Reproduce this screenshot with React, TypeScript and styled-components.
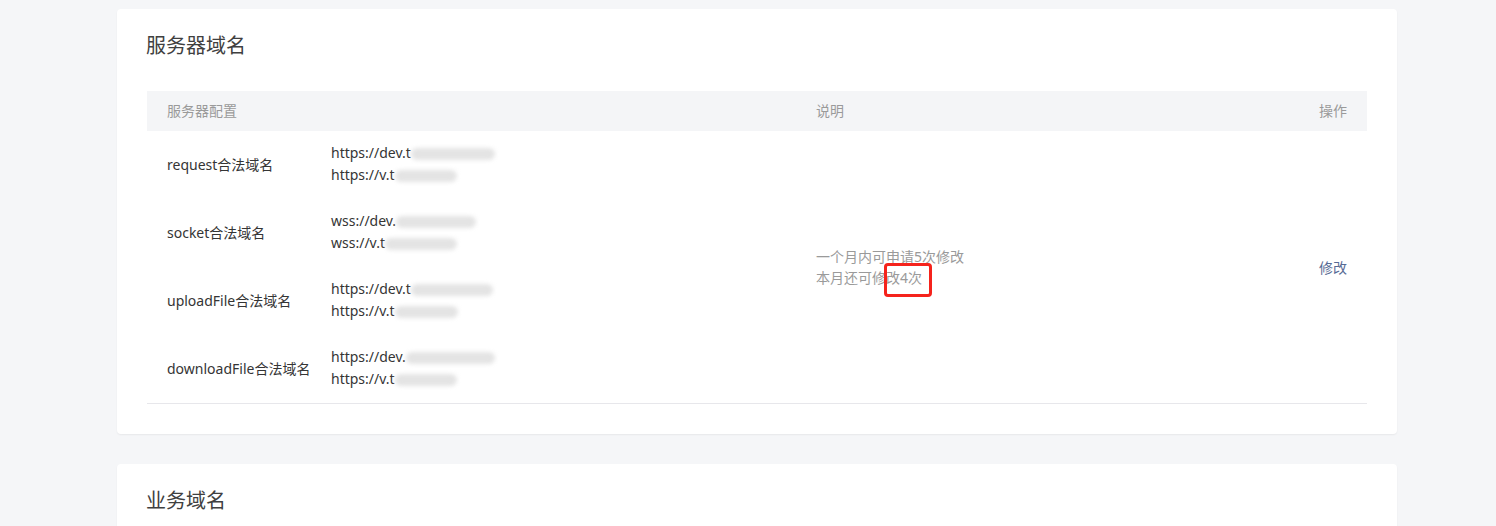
import React from "react";
import styled, { createGlobalStyle } from "styled-components";

const GlobalStyle = createGlobalStyle`
  html, body { margin: 0; padding: 0; background: #f5f6f8; }
  body {
    font-family: "Noto Sans", "Noto Sans CJK SC", sans-serif;
    -webkit-font-smoothing: antialiased;
  }
`;

const Page = styled.div`
  padding: 9px 99px 0 117px;
  display: flex;
  flex-direction: column;
  gap: 30px;
`;

const Card = styled.section`
  background: #fff;
  border-radius: 4px;
  box-shadow: 0 1px 2px rgba(0, 0, 0, 0.06);
  padding: 23px 30px 30px 29px;
`;

const Title = styled.h2`
  margin: 0;
  font-size: 20px;
  font-weight: 400;
  line-height: 28px;
  color: #404040;
`;

const Table = styled.div`
  margin-top: 31px;
  margin-left: 1px;
  display: grid;
  grid-template-columns: 184px 485px 1fr auto;
  border-bottom: 1px solid #e7e7eb;
  font-size: 14px;
`;

const HeadCell = styled.div<{ $span?: number; $align?: string; $pl?: number }>`
  grid-column: span ${(p) => p.$span || 1};
  background: #f4f5f7;
  color: #9a9a9a;
  height: 40px;
  line-height: 40px;
  padding: 0 20px 0 ${(p) => (p.$pl ?? 20)}px;
  text-align: ${(p) => p.$align || "left"};
`;

const LabelCell = styled.div<{ $row: number }>`
  grid-row: ${(p) => p.$row};
  grid-column: 1;
  display: flex;
  align-items: center;
  padding: 0 0 2px 20px;
  color: #353535;
  height: 68px;
  box-sizing: border-box;
`;

const DomainCell = styled.div<{ $row: number }>`
  grid-row: ${(p) => p.$row};
  grid-column: 2;
  display: flex;
  flex-direction: column;
  justify-content: center;
  color: #353535;
  line-height: 22px;
  height: 68px;
  padding-bottom: 2px;
  box-sizing: border-box;
`;

const DescCell = styled.div`
  grid-column: 3;
  grid-row: 2 / 6;
  display: flex;
  flex-direction: column;
  justify-content: center;
  color: #9a9a9a;
  line-height: 21px;
`;

const DescInner = styled.div`
  position: relative;
`;

const Mark = styled.span`
  position: absolute;
  left: 68px;
  top: 17px;
  width: 48px;
  height: 34px;
  box-sizing: border-box;
  border: 3px solid #f5231c;
  border-radius: 4px;
`;

const OpCell = styled.div`
  grid-column: 4;
  grid-row: 2 / 6;
  display: flex;
  align-items: center;
  justify-content: flex-end;
  padding: 0 20px;
`;

const Link = styled.a`
  color: #576b95;
  text-decoration: none;
  cursor: pointer;
`;

const Line = styled.div`
  display: flex;
  align-items: center;
  white-space: nowrap;
`;

const Blur = styled.span<{ $w: number }>`
  display: inline-block;
  width: ${(p) => p.$w}px;
  height: 12px;
  margin-top: 2px;
  background: #e4e4e4;
  border-radius: 6px;
  filter: blur(2px);
`;

const rows: { label: string; lines: [string, number][] }[] = [
  { label: "request合法域名", lines: [["https://dev.t", 84], ["https://v.t", 62]] },
  { label: "socket合法域名", lines: [["wss://dev.", 80], ["wss://v.t", 72]] },
  { label: "uploadFile合法域名", lines: [["https://dev.t", 82], ["https://v.t", 63]] },
  { label: "downloadFile合法域名", lines: [["https://dev.", 89], ["https://v.t", 62]] },
];

export default function App() {
  return (
    <>
      <GlobalStyle />
      <Page>
        <Card>
          <Title>服务器域名</Title>
          <Table>
            <HeadCell $span={2}>服务器配置</HeadCell>
            <HeadCell $pl={0}>说明</HeadCell>
            <HeadCell $align="right">操作</HeadCell>
            {rows.map((r, i) => (
              <React.Fragment key={r.label}>
                <LabelCell $row={i + 2}>{r.label}</LabelCell>
                <DomainCell $row={i + 2}>
                  {r.lines.map(([t, w]) => (
                    <Line key={t}>
                      {t}
                      <Blur $w={w} />
                    </Line>
                  ))}
                </DomainCell>
              </React.Fragment>
            ))}
            <DescCell>
              <DescInner>
                <div>一个月内可申请5次修改</div>
                <div>本月还可修改4次</div>
                <Mark />
              </DescInner>
            </DescCell>
            <OpCell>
              <Link>修改</Link>
            </OpCell>
          </Table>
        </Card>
        <Card>
          <Title>业务域名</Title>
          <div style={{ height: 40 }} />
        </Card>
      </Page>
    </>
  );
}
